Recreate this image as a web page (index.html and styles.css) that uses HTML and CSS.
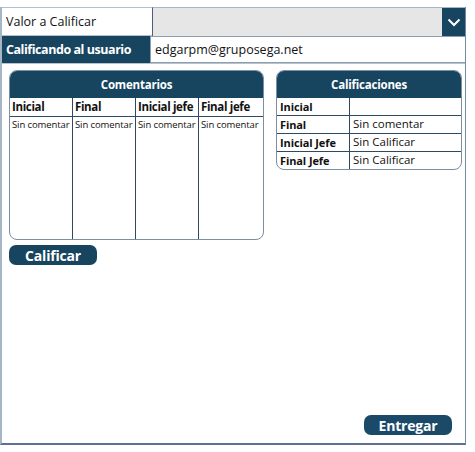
FILE: index.html
```html
<!DOCTYPE html>
<html>
<head>
<meta charset="utf-8">
<link rel="stylesheet" href="styles.css">
</head>
<body>
<div class="screen">
  <div class="row row1">
    <div class="lbl">Valor a Calificar</div>
    <div class="dropdown">
      <div class="chev">
        <svg width="14" height="9" viewBox="0 0 14 9"><path d="M1.5 1.5 L7 7 L12.5 1.5" fill="none" stroke="#fff" stroke-width="2"/></svg>
      </div>
    </div>
  </div>
  <div class="row row2">
    <div class="lbl dark">Calificando al usuario</div>
    <div class="field">edgarpm@gruposega.net</div>
  </div>
  <div class="content">
    <div class="cards">
      <div class="card coments">
        <div class="chead">Comentarios</div>
        <div class="cgrid">
          <div class="ch">Inicial</div>
          <div class="ch">Final</div>
          <div class="ch">Inicial jefe</div>
          <div class="ch last">Final jefe</div>
          <div class="cb">Sin comentar</div>
          <div class="cb">Sin comentar</div>
          <div class="cb">Sin comentar</div>
          <div class="cb last">Sin comentar</div>
        </div>
      </div>
      <div class="card califs">
        <div class="chead">Calificaciones</div>
        <div class="qrow"><div class="qk">Inicial</div><div class="qv"></div></div>
        <div class="qrow"><div class="qk">Final</div><div class="qv">Sin comentar</div></div>
        <div class="qrow"><div class="qk">Inicial Jefe</div><div class="qv">Sin Calificar</div></div>
        <div class="qrow lastrow"><div class="qk">Final Jefe</div><div class="qv">Sin Calificar</div></div>
      </div>
    </div>
    <div class="btn calificar">Calificar</div>
    <div class="spacer"></div>
    <div class="btn entregar">Entregar</div>
  </div>
</div>
</body>
</html>
```
FILE: styles.css
```css
* { box-sizing: border-box; }
body {
  margin: 0;
  background: #fff;
  font-family: "Open Sans", "Liberation Sans", sans-serif;
  color: #111;
}
.screen {
  margin-top: 7px;
  width: 466px;
  height: 438px;
  border-left: 2px solid #a7b6c4;
  border-right: 1px solid #7689a0;
  border-bottom: 2px solid #5f6f93;
  display: flex;
  flex-direction: column;
}
.row { display: flex; }
.row1 { height: 29px; }
.row2 { height: 28px; border-bottom: 1px solid #b8c3cd; }
.lbl {
  width: 150px;
  display: flex;
  align-items: center;
  padding-left: 4px;
  font-size: 12.5px;
}
.row1 .lbl {
  border-top: 1px solid #b3bfcb;
  border-bottom: 1px solid #b3bfcb;
  background: #fff;
}
.dropdown {
  flex: 1;
  background: #e6e6e6;
  border-left: 1px solid #4c5d86;
  border-top: 1px solid #a9b5c2;
  display: flex;
  justify-content: flex-end;
}
.chev {
  width: 23px;
  background: #17445f;
  display: flex;
  align-items: center;
  justify-content: center;
}
.lbl.dark {
  width: 148px;
  background: #17445f;
  color: #fff;
  font-weight: 700;
  font-size: 12.5px;
  letter-spacing: -0.45px;
}
.field {
  flex: 1;
  border: 1px solid #8d9db0;
  border-right: none;
  display: flex;
  align-items: center;
  padding-left: 4px;
  font-size: 12.5px;
}
.content {
  flex: 1;
  padding: 6px 3px 8px 7px;
  display: flex;
  flex-direction: column;
}
.cards { display: flex; gap: 12px; align-items: flex-start; }
.card {
  flex-shrink: 0;
  border: 1px solid #7b8ea3;
  border-radius: 8px;
  overflow: hidden;
  background: #fff;
}
.chead {
  height: 27px;
  background: #17445f;
  color: #fff;
  font-weight: 700;
  font-size: 11.5px;
  letter-spacing: -0.2px;
  display: flex;
  align-items: center;
  justify-content: center;
}
.coments { width: 255px; height: 170px; display: flex; flex-direction: column; }
.cgrid {
  flex: 1;
  display: grid;
  grid-template-columns: 63px 63px 63px 1fr;
  grid-template-rows: 19px 1fr;
}
.ch {
  border-right: 1px solid #2d4965;
  border-bottom: 1px solid #2d4965;
  font-weight: 700;
  font-size: 11.5px;
  letter-spacing: -0.35px;
  padding-left: 2px;
  line-height: 18px;
  white-space: nowrap;
  overflow: hidden;
}
.cb {
  border-right: 1px solid #2d4965;
  font-size: 9.5px;
  letter-spacing: -0.1px;
  padding: 1px 0 0 2px;
  white-space: nowrap;
  overflow: hidden;
}
.ch.last, .cb.last { border-right: none; }
.califs { width: 186px; height: 100px; }
.qrow {
  display: flex;
  height: 18px;
  border-bottom: 1px solid #2d4965;
}
.qrow.lastrow { border-bottom: none; }
.qk {
  width: 73px;
  border-right: 1px solid #2d4965;
  font-weight: 700;
  font-size: 11px;
  letter-spacing: -0.1px;
  padding-left: 3px;
  line-height: 18px;
  white-space: nowrap;
}
.qv {
  flex: 1;
  font-size: 11.5px;
  padding-left: 3px;
  line-height: 16px;
  white-space: nowrap;
}
.btn {
  flex-shrink: 0;
  width: 88px;
  height: 20px;
  border-radius: 7px;
  background: #17445f;
  color: #fff;
  font-weight: 700;
  font-size: 14px;
  letter-spacing: -0.2px;
  display: flex;
  align-items: center;
  justify-content: center;
}
.calificar { margin-top: 5px; }
.spacer { flex: 1; }
.entregar { align-self: flex-end; margin-right: 10px; background: #1b4a69; }
```
